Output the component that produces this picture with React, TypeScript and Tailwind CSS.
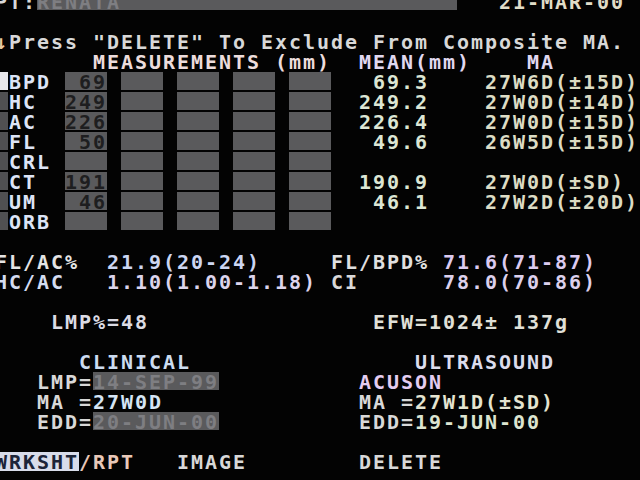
import React from 'react';

const rows = [
  { label: 'BPD', value: '69', mean: '69.3', ma: '27W6D(±15D)', active: true },
  { label: 'HC', value: '249', mean: '249.2', ma: '27W0D(±14D)' },
  { label: 'AC', value: '226', mean: '226.4', ma: '27W0D(±15D)' },
  { label: 'FL', value: '50', mean: '49.6', ma: '26W5D(±15D)' },
  { label: 'CRL', value: '', mean: '', ma: '' },
  { label: 'CT', value: '191', mean: '190.9', ma: '27W0D(±SD)' },
  { label: 'UM', value: '46', mean: '46.1', ma: '27W2D(±20D)' },
  { label: 'ORB', value: '', mean: '', ma: '' },
];

function Line({ children }: { children?: React.ReactNode }) {
  return <div className="flex h-[20px] whitespace-pre">{children}</div>;
}

function Field({ children }: { children: React.ReactNode }) {
  return <span className="h-[18px] bg-[#5a5a5c] text-[#7e7e82]">{children}</span>;
}

function MeasureRow({ label, value, mean, ma, active }: (typeof rows)[number]) {
  return (
    <div className="flex h-[20px] whitespace-pre">
      <div className="w-[14px]">
        <div className={`w-[13px] h-[18px] ${active ? 'bg-[#e8e8ec]' : 'bg-[#505052]'}`} />
      </div>
      <span className="w-[56px] text-[#dce4f6]">{label}</span>
      <div className="w-[42px] h-[18px] bg-[#5a5a5c] text-right text-[#1e1e20]">{value}</div>
      <div className="w-[14px]" />
      <div className="w-[42px] h-[18px] bg-[#5a5a5c]" />
      <div className="w-[14px]" />
      <div className="w-[42px] h-[18px] bg-[#5a5a5c]" />
      <div className="w-[14px]" />
      <div className="w-[42px] h-[18px] bg-[#5a5a5c]" />
      <div className="w-[14px]" />
      <div className="w-[42px] h-[18px] bg-[#5a5a5c]" />
      <span className="w-[98px] text-right text-[#dce6d4]">{mean}</span>
      <div className="w-[56px]" />
      <span className="text-[#dcdcc4]">{ma}</span>
    </div>
  );
}

export default function App() {
  return (
    <div className="w-[640px] h-[480px] overflow-hidden bg-[#030303]">
      <div className="-mt-[8px] -ml-[5px] font-['DejaVu_Sans_Mono',monospace] font-bold text-[20px] leading-[20px] tracking-[1.96px] text-[#d8d8d8]">
        {/* header */}
        <Line>
          <span>PT:</span>
          <Field>{'RENATA                        '}</Field>
          <span>{'   '}</span>
          <span className="text-[#e0dcc8]">21-MAR-00</span>
        </Line>
        <Line />
        <Line>
          <span className="text-[#e8c8a0]">↓</span>
          <span>{'Press "DELETE" To Exclude From Composite MA.'}</span>
        </Line>
        <Line>
          <span>{'       '}</span>
          <span className="text-[#ecdcdc]">MEASUREMENTS (mm)</span>
          <span>{'  '}</span>
          <span className="text-[#e0d8f0]">MEAN(mm)</span>
          <span>{'    '}</span>
          <span className="text-[#e0d8f0]">MA</span>
        </Line>

        {/* measurements table */}
        {rows.map((r) => (
          <MeasureRow key={r.label} {...r} />
        ))}

        <Line />
        <Line>
          <span className="text-[#e4e4e4]">FL/AC%</span>
          <span>{'  '}</span>
          <span className="text-[#ccd6f2]">21.9(20-24)</span>
          <span>{'     '}</span>
          <span className="text-[#e0e0e0]">FL/BPD%</span>
          <span>{' '}</span>
          <span className="text-[#dccaf0]">71.6(71-87)</span>
        </Line>
        <Line>
          <span className="text-[#d4dcf0]">HC/AC</span>
          <span>{'   '}</span>
          <span className="text-[#dcd4ec]">1.10(1.00-1.18)</span>
          <span>{' '}</span>
          <span>CI</span>
          <span>{'      '}</span>
          <span className="text-[#dcd0ec]">78.0(70-86)</span>
        </Line>
        <Line />
        <Line>
          <span>{'    '}</span>
          <span className="text-[#dcdce4]">LMP%=48</span>
          <span>{'                '}</span>
          <span className="text-[#e0e0d8]">EFW=1024± 137g</span>
        </Line>
        <Line />

        {/* clinical / ultrasound */}
        <Line>
          <span>{'      '}</span>
          <span className="text-[#ccdcf0]">CLINICAL</span>
          <span>{'                '}</span>
          <span className="text-[#dcdcec]">ULTRASOUND</span>
        </Line>
        <Line>
          <span>{'   '}</span>
          <span>LMP=</span>
          <Field>14-SEP-99</Field>
          <span>{'          '}</span>
          <span className="text-[#e4ccf0]">ACUSON</span>
        </Line>
        <Line>
          <span>{'   '}</span>
          <span>MA =</span>
          <span className="text-[#d4e4f4]">27W0D</span>
          <span>{'              '}</span>
          <span>MA =</span>
          <span className="text-[#e4e4d0]">27W1D(±SD)</span>
        </Line>
        <Line>
          <span>{'   '}</span>
          <span>EDD=</span>
          <Field>20-JUN-00</Field>
          <span>{'          '}</span>
          <span>EDD=</span>
          <span className="text-[#dce4d0]">19-JUN-00</span>
        </Line>
        <Line />

        {/* soft keys */}
        <Line>
          <span className="h-[19px] bg-[#d8dcea] text-[#1c2438]">WRKSHT</span>
          <span className="text-[#e8c8b8]">/RPT</span>
          <span>{'   '}</span>
          <span>IMAGE</span>
          <span>{'        '}</span>
          <span>DELETE</span>
        </Line>
      </div>
    </div>
  );
}
